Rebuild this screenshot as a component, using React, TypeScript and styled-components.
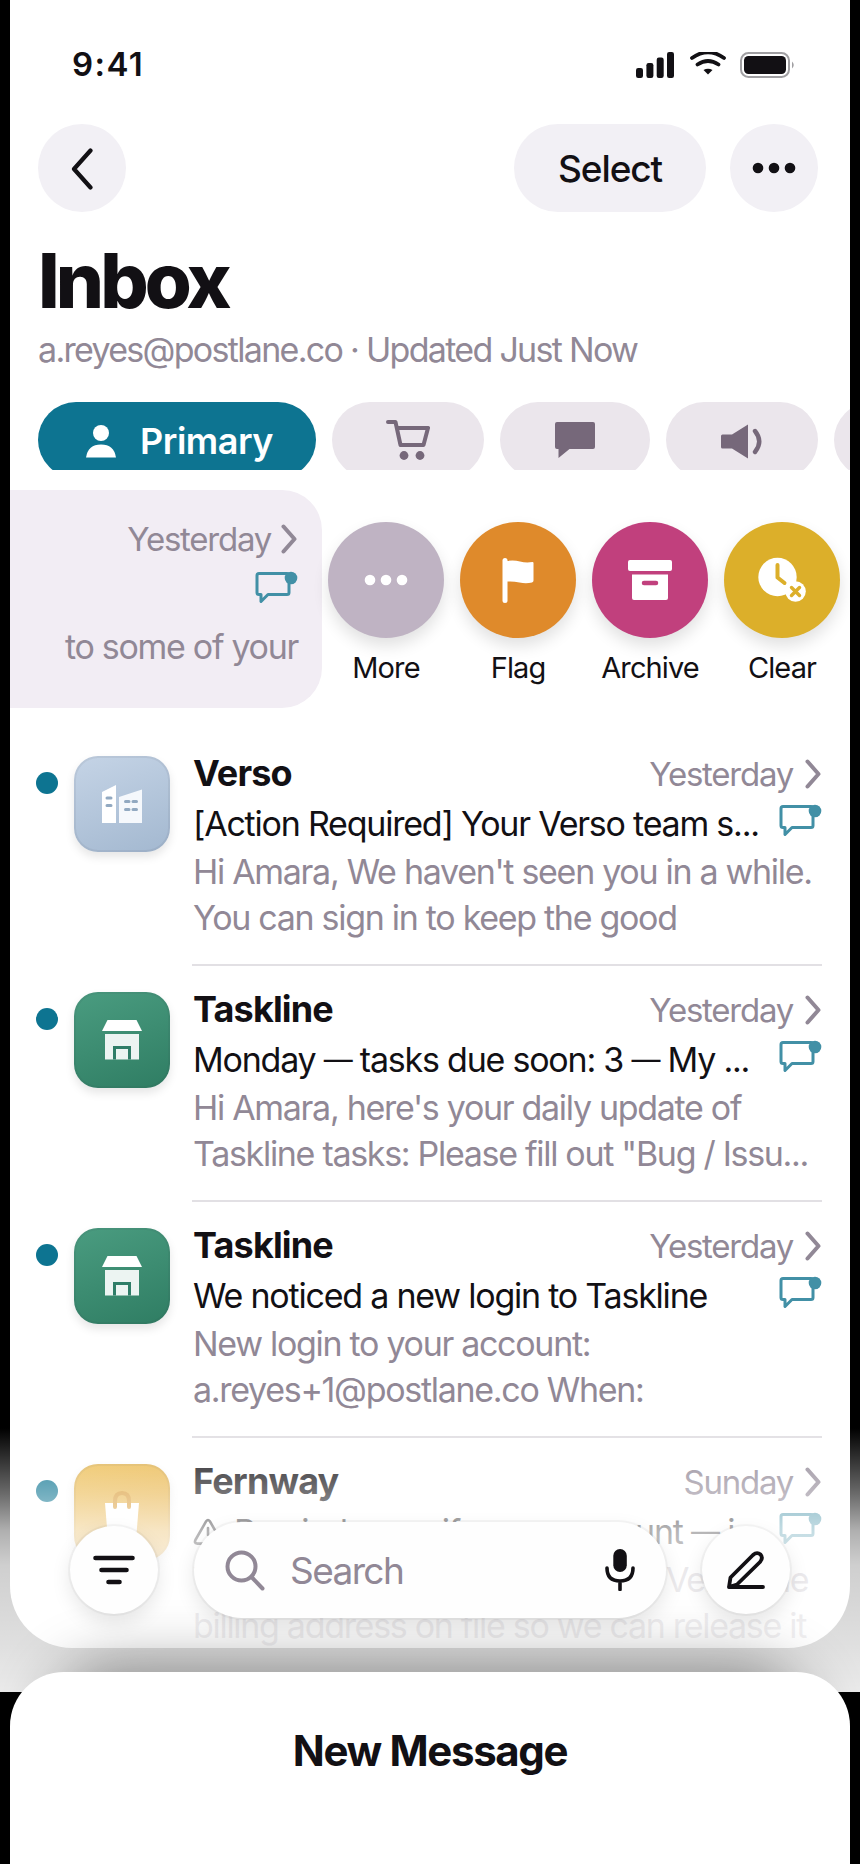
import React from 'react';
import styled, { createGlobalStyle } from 'styled-components';

const INK = '#121014';
const MUTED = '#918896';
const TEAL = '#0d7491';

const GlobalStyle = createGlobalStyle`
  * { box-sizing: border-box; }
  body {
    margin: 0;
    background: #000;
    font-family: Inter, "Liberation Sans", sans-serif;
    color: ${INK};
  }
`;

const Stage = styled.main`
  position: relative;
  width: 860px;
  height: 1864px;
  overflow: hidden;
  background: #000;
`;

const Screen = styled.section`
  width: 840px;
  height: 1648px;
  margin: 0 10px;
  background: #fff;
  border-radius: 0 0 62px 62px;
  overflow: hidden;
`;

const StatusBar = styled.div`
  display: flex;
  justify-content: space-between;
  height: 124px;
  padding: 44px 55px 0 62px;
`;

const Time = styled.span`
  font-size: 33px;
  line-height: 40px;
  font-weight: 600;
  letter-spacing: 1.4px;
`;

const StatusIcons = styled.div`
  display: flex;
  padding-top: 8px;
`;

const NavBar = styled.nav`
  display: flex;
  gap: 24px;
  height: 88px;
  padding: 0 32px 0 28px;
`;

const NavButton = styled.button<{ $width?: number }>`
  display: flex;
  align-items: center;
  justify-content: center;
  width: ${(p) => p.$width ?? 88}px;
  height: 88px;
  padding: 0;
  border: 0;
  border-radius: 44px;
  background: #f2f0f5;
  color: ${INK};
  font: 500 37px/44px Inter, sans-serif;
  letter-spacing: -1.1px;
`;

const SelectLabel = styled.span`
  padding-top: 1px;
`;

const Spacer = styled.div`
  flex: 1;
`;

const Heading = styled.header`
  height: 190px;
  padding: 20px 28px 0;
`;

const Title = styled.h1`
  margin: 0;
  font-size: 76px;
  line-height: 96px;
  font-weight: 800;
  letter-spacing: -3.9px;
`;

const Subtitle = styled.p`
  margin: 0;
  font-size: 34px;
  line-height: 44px;
  letter-spacing: -1.7px;
  color: ${MUTED};
`;

const Chips = styled.div`
  display: flex;
  gap: 16px;
  height: 68px;
  padding-left: 28px;
  overflow: hidden;
`;

const Chip = styled.div<{ $width: number; $active?: boolean }>`
  display: flex;
  flex: none;
  align-items: center;
  justify-content: center;
  gap: 23px;
  width: ${(p) => p.$width}px;
  height: 76px;
  padding: ${(p) => (p.$active ? '2px 0 0 4px' : '0')};
  border-radius: 38px;
  background: ${(p) => (p.$active ? TEAL : '#ebe6ec')};
  color: ${(p) => (p.$active ? '#fff' : '#76687a')};
  font-size: 36px;
  font-weight: 600;
  letter-spacing: -0.5px;
`;

const SwipeRow = styled.div`
  display: flex;
  height: 218px;
  margin-top: 20px;
`;

const SwipedMail = styled.div`
  display: flex;
  flex-direction: column;
  align-items: flex-end;
  width: 312px;
  padding: 26px 24px 0 0;
  border-radius: 0 40px 40px 0;
  background: #f2edf4;
`;

const SwipeActions = styled.div`
  display: flex;
  gap: 16px;
  padding: 32px 0 0 6px;
`;

const Action = styled.div`
  display: flex;
  flex-direction: column;
  align-items: center;
  width: 116px;
  font-size: 29px;
  line-height: 36px;
  letter-spacing: -0.9px;
  white-space: nowrap;
`;

const ActionDisc = styled.div<{ $color: string }>`
  display: flex;
  align-items: center;
  justify-content: center;
  width: 116px;
  height: 116px;
  margin-bottom: 12px;
  border-radius: 50%;
  background: ${(p) => p.$color};
  color: #fff;
  box-shadow: 0 8px 16px rgba(0, 0, 0, 0.12);
`;

const MailList = styled.div`
  padding-top: 34px;
`;

const Mail = styled.article`
  display: flex;
  height: 236px;
  padding: 14px 28px 0 26px;
`;

const Unread = styled.span`
  width: 22px;
  height: 22px;
  margin: 16px 16px 0 0;
  border-radius: 50%;
  background: ${TEAL};
`;

const Avatar = styled.div<{ $bg: string }>`
  display: flex;
  align-items: center;
  justify-content: center;
  width: 96px;
  height: 96px;
  margin-right: 22px;
  border-radius: 24px;
  background: ${(p) => p.$bg};
  box-shadow: 0 5px 10px rgba(0, 0, 0, 0.1), inset 0 0 0 2px rgba(60, 60, 70, 0.07);
`;

const MailBody = styled.div<{ $divided?: boolean }>`
  flex: 1;
  min-width: 0;
  height: 210px;
  padding-left: 1px;
  border-bottom: 2px solid ${(p) => (p.$divided ? '#e2e0e4' : 'transparent')};
`;

const Line = styled.div<{ $height: number }>`
  display: flex;
  align-items: center;
  justify-content: space-between;
  height: ${(p) => p.$height}px;
`;

const Sender = styled.h2`
  margin: 0;
  font-size: 36px;
  line-height: 34px;
  font-weight: 700;
  letter-spacing: -0.85px;
`;

const When = styled.span<{ $gap?: number }>`
  display: flex;
  align-items: center;
  gap: ${(p) => p.$gap ?? 12}px;
  font-size: 33px;
  line-height: 44px;
  letter-spacing: -1.25px;
  color: ${MUTED};
  padding-top: 1px;
`;

const Subject = styled.div`
  display: flex;
  align-items: center;
  gap: 11px;
  padding-top: 8px;
  font-size: 34px;
  line-height: 44px;
  letter-spacing: -1.22px;
  white-space: nowrap;
`;

const Dash = styled.span`
  font-size: 29px;
  vertical-align: 2px;
  line-height: 1;
`;

const Preview = styled.p`
  margin: 0;
  font-size: 34px;
  line-height: 46px;
  letter-spacing: -1.3px;
  color: ${MUTED};
  white-space: pre;
`;

const BottomFade = styled.div`
  position: absolute;
  inset: 1428px 0 172px;
  background: linear-gradient(
    rgba(255, 255, 255, 0) 0%,
    rgba(255, 255, 255, 0.25) 15%,
    rgba(255, 255, 255, 0.42) 25%,
    rgba(255, 255, 255, 0.69) 39%,
    rgba(255, 255, 255, 0.81) 52%,
    rgba(255, 255, 255, 0.88) 83%,
    rgba(255, 255, 255, 0.92) 100%
  );
`;

const Sheet = styled.section`
  position: absolute;
  inset: 1672px 10px 0;
  padding-top: 52px;
  border-radius: 54px 54px 0 0;
  background: #fff;
  text-align: center;
  font-size: 42px;
  line-height: 54px;
  font-weight: 700;
  letter-spacing: -1.35px;
`;

const SheetShadow = styled.div`
  position: absolute;
  inset: 1428px 0 172px;
  overflow: hidden;
  &::after {
    content: '';
    position: absolute;
    inset: 244px 60px -200px;
    border-radius: 54px;
    box-shadow: 0 0 60px 6px rgba(0, 0, 0, 0.42);
  }
`;

const Toolbar = styled.div`
  position: absolute;
  inset: 1522px 70px auto;
  display: flex;
  align-items: center;
  height: 96px;
`;

const RoundButton = styled.button`
  display: flex;
  align-items: center;
  justify-content: center;
  width: 88px;
  height: 88px;
  padding: 0;
  border: 0;
  border-radius: 50%;
  background: #fefefe;
  box-shadow: 0 0 0 2px rgba(0, 0, 0, 0.035), 0 8px 20px rgba(0, 0, 0, 0.1);
`;

const SearchField = styled.div`
  display: flex;
  align-items: center;
  width: 472px;
  height: 96px;
  margin: 0 36px;
  padding: 0 31px;
  border-radius: 48px;
  background: #fefefe;
  box-shadow: 0 0 0 2px rgba(0, 0, 0, 0.035), 0 8px 20px rgba(0, 0, 0, 0.1);
  color: ${MUTED};
  font-size: 37px;
  letter-spacing: -1.6px;
`;

const SearchText = styled.span`
  flex: 1;
  padding-left: 25px;
`;

const Chevron = () => (
  <svg width="17" height="30" viewBox="0 0 17 30" fill="none" stroke="currentColor" strokeWidth="4" strokeLinecap="round" strokeLinejoin="round">
    <path d="M2.500 2.500 13.500 15 2.500 27.500" />
  </svg>
);

const ThreadSvg = styled.svg`
  flex: none;
`;

const ThreadIcon = () => (
  <ThreadSvg width="44" height="34" viewBox="0 0 44 34">
    <path d="M5 3.500h28q2 0 2 2v17q0 2-2 2H14L7 31.500V24.500H5q-2 0-2-2v-17q0-2 2-2Z" fill="none" stroke="#4290a6" strokeWidth="3" strokeLinejoin="round" />
    <circle cx="37" cy="8" r="6.300" fill="#4290a6" />
  </ThreadSvg>
);

const Dots = () => (
  <svg width="44" height="12" viewBox="0 0 44 12" fill="currentColor">
    <circle cx="6" cy="6" r="5.300" />
    <circle cx="22" cy="6" r="5.300" />
    <circle cx="38" cy="6" r="5.300" />
  </svg>
);

const Buildings = () => (
  <svg width="42" height="40" viewBox="0 0 42 40">
    <path d="M1 8 15 1v38H1Z" fill="#fff" />
    <path d="M18 13 41 5.500V39H18Z" fill="#f5f8fc" />
    <g stroke="#92a9c1" strokeWidth="3" strokeLinecap="round">
      <path d="M6 14h4M6 21.500h4M24.500 17.500h3.500M32 17.500h3.500M24.500 25.500h3.500M32 25.500h3.500" />
    </g>
  </svg>
);

const Store = () => (
  <svg width="42" height="40" viewBox="0 0 42 40">
    <path d="M6.500 0h29L41 11H1Z" fill="#fff" />
    <path d="M4 14h34v25.500H4Z" fill="#ecf4f2" />
    <path d="M12 26h18v13.500h-3V29H15v10.500h-3Z" fill="#2f7d68" />
  </svg>
);

const Bag = () => (
  <svg width="42" height="44" viewBox="0 0 42 44">
    <path d="M4 13h34l-2.500 31h-29Z" fill="#fff" />
    <path d="M14 17v-6q0-8 7-8t7 8v6" fill="none" stroke="#d8982f" strokeWidth="4" strokeLinecap="round" />
  </svg>
);

const Warning = () => (
  <svg width="30" height="28" viewBox="0 0 30 28" fill="none" stroke="currentColor" strokeWidth="2.600" strokeLinecap="round" strokeLinejoin="round">
    <path d="M13.200 3.200 2.400 22q-1.400 3 1.600 3.600h22q3-.6 1.600-3.600L16.800 3.200q-1.800-2.400-3.600 0ZM15 10v7M15 21v.4" />
  </svg>
);

const BLUE_BG = 'linear-gradient(160deg, #c5d4e6, #a3b8d0)';
const GREEN_BG = 'linear-gradient(160deg, #4a9c80, #2f7d63)';
const GOLD_BG = 'linear-gradient(160deg, #edbf55, #e3a83c)';

type MailData = {
  sender: string;
  when: string;
  subject: string;
  preview: string;
  bg: string;
  icon: React.ReactNode;
  warn?: boolean;
};

const mails: MailData[] = [
  { sender: 'Verso', when: 'Yesterday', subject: '[Action Required] Your Verso team s...', preview: "Hi Amara, We haven't seen you in a while.\nYou can sign in to keep the good", bg: BLUE_BG, icon: <Buildings /> },
  { sender: 'Taskline', when: 'Yesterday', subject: 'Monday — tasks due soon: 3 — My ...', preview: 'Hi Amara, here\'s your daily update of\nTaskline tasks: Please fill out "Bug / Issu...', bg: GREEN_BG, icon: <Store /> },
  { sender: 'Taskline', when: 'Yesterday', subject: 'We noticed a new login to Taskline', preview: 'New login to your account:\na.reyes+1@postlane.co When:', bg: GREEN_BG, icon: <Store /> },
  { sender: 'Fernway', when: 'Sunday', subject: 'Reminder: verify your account — i...', preview: 'Your deposit is on hold for now. Verify the\nbilling address on file so we can release it', bg: GOLD_BG, icon: <Bag />, warn: true },
];

const SubjectText = ({ text }: { text: string }) => (
  <span>
    {text.split('—').map((part, i) => (
      <React.Fragment key={i}>
        {i > 0 && <Dash>—</Dash>}
        {part}
      </React.Fragment>
    ))}
  </span>
);

export default function App() {
  return (
    <Stage>
      <GlobalStyle />
      <Screen>
        <StatusBar>
          <Time>9:41</Time>
          <StatusIcons>
            <svg width="160" height="27" viewBox="0 0 160 27" fill={INK}>
              <rect x="1" y="16" width="7" height="10" rx="2.200" />
              <rect x="11.400" y="11" width="7" height="15" rx="2.200" />
              <rect x="21.700" y="5.500" width="7" height="20.500" rx="2.200" />
              <rect x="32" y="0" width="7" height="26" rx="2.200" />
              <g fill="none" stroke={INK} strokeWidth="3.800" strokeLinecap="round">
                <path d="M57 6q16-11.500 32 0M62.500 12.500q10.500-7 21 0" />
              </g>
              <path d="M68.500 18q4.500-2.600 9 0L73 22.500Z" />
              <rect x="106" y="1" width="48" height="24" rx="7.500" fill="none" stroke="#a09fa2" strokeWidth="2" />
              <rect x="109" y="4" width="42" height="18" rx="4.500" />
              <path d="M157 9.500q3.500 3.500 0 7Z" fill="#a09fa2" />
            </svg>
          </StatusIcons>
        </StatusBar>

        <NavBar>
          <NavButton aria-label="Back">
            <svg width="24" height="44" viewBox="0 0 24 44" fill="none" stroke={INK} strokeWidth="4.200" strokeLinecap="round" strokeLinejoin="round">
              <path d="M20.500 4.500 4 23l16.500 18.500" />
            </svg>
          </NavButton>
          <Spacer />
          <NavButton $width={192}><SelectLabel>Select</SelectLabel></NavButton>
          <NavButton aria-label="More"><Dots /></NavButton>
        </NavBar>

        <Heading>
          <Title>Inbox</Title>
          <Subtitle>a.reyes@postlane.co · Updated Just Now</Subtitle>
        </Heading>

        <Chips>
          <Chip $width={278} $active>
            <svg width="32" height="34" viewBox="0 0 32 34" fill="currentColor">
              <circle cx="16" cy="9" r="8" />
              <path d="M1 33.500Q3 20.500 16 20.500T31 33.500Z" />
            </svg>
            Primary
          </Chip>
          <Chip $width={152}>
            <svg width="44" height="42" viewBox="0 0 44 42" fill="none" stroke="currentColor" strokeWidth="4" strokeLinecap="round" strokeLinejoin="round">
              <path d="M2 3h7.500L14.500 26h23L42 9H11" />
              <g fill="currentColor" stroke="none"><circle cx="18" cy="36.500" r="4.400" /><circle cx="34" cy="36.500" r="4.400" /></g>
            </svg>
          </Chip>
          <Chip $width={150}>
            <svg width="40" height="38" viewBox="0 0 40 38" fill="currentColor">
              <path d="M2 1h36q2 0 2 2v23q0 2-2 2H14.500L3.500 37V28H2q-2 0-2-2V3q0-2 2-2Z" />
            </svg>
          </Chip>
          <Chip $width={152}>
            <svg width="42" height="40" viewBox="0 -3.500 42 40" fill="currentColor">
              <path d="M1.500 11H11L27 1v34L11 25H1.500Q0 25 0 23.500v-11Q0 11 1.500 11Z" />
              <path d="M34 7.500q8.500 10.500 0 21" fill="none" stroke="currentColor" strokeWidth="4.400" strokeLinecap="round" />
            </svg>
          </Chip>
          <Chip $width={152} />
        </Chips>

        <SwipeRow>
          <SwipedMail>
            <When $gap={10}>Yesterday <Chevron /></When>
            <Line $height={52}><ThreadIcon /></Line>
            <Line $height={67}><Preview>to some of your</Preview></Line>
          </SwipedMail>
          <SwipeActions>
            <Action><ActionDisc $color="#bfb3c3"><Dots /></ActionDisc>More</Action>
            <Action>
              <ActionDisc $color="#df8a2b">
                <svg width="34" height="46" viewBox="0 0 34 46" fill="#fff">
                  <rect x="1.500" y="1" width="5" height="45" rx="2.500" />
                  <path d="M6 4q7-1 13 .5t12.500.5q1 0 1 1v17.500q0 1.500-1.500 2-6 1.500-12.500 0T6 24.500Z" />
                </svg>
              </ActionDisc>
              Flag
            </Action>
            <Action>
              <ActionDisc $color="#c1407d">
                <svg width="44" height="40" viewBox="0 0 44 40" fill="#fff">
                  <rect width="44" height="11" rx="2" />
                  <path d="M4 14.500h36V38q0 2-2 2H6q-2 0-2-2Z" />
                  <path d="M16 23h12" stroke="#c1407d" strokeWidth="4.500" strokeLinecap="round" />
                </svg>
              </ActionDisc>
              Archive
            </Action>
            <Action>
              <ActionDisc $color="#dcaf2a">
                <svg width="48" height="46" viewBox="0 0 48 46">
                  <circle cx="19.500" cy="20" r="19.200" fill="#fff" />
                  <path d="M19.500 8v12.500l7 5.500" fill="none" stroke="#dcaf2a" strokeWidth="4" strokeLinecap="round" strokeLinejoin="round" />
                  <circle cx="37.500" cy="34.500" r="10.300" fill="#fff" />
                  <path d="m33.500 30.500 8 8m0-8-8 8" stroke="#dcaf2a" strokeWidth="3.400" strokeLinecap="round" />
                </svg>
              </ActionDisc>
              Clear
            </Action>
          </SwipeActions>
        </SwipeRow>

        <MailList>
          {mails.map((m, i) => (
            <Mail key={i}>
              <Unread />
              <Avatar $bg={m.bg}>{m.icon}</Avatar>
              <MailBody $divided={i < 3}>
                <Line $height={34}><Sender>{m.sender}</Sender><When>{m.when} <Chevron /></When></Line>
                <Line $height={59}><Subject>{m.warn && <Warning />}<SubjectText text={m.subject} /></Subject><ThreadIcon /></Line>
                <Preview>{m.preview}</Preview>
              </MailBody>
            </Mail>
          ))}
        </MailList>
      </Screen>

      <BottomFade />
      <SheetShadow />

      <Toolbar>
        <RoundButton aria-label="Filter">
          <svg width="44" height="32" viewBox="0 0 44 32" stroke={INK} strokeWidth="4.600" strokeLinecap="round">
            <path d="M3.500 4h37M9.500 16h25M16.500 28h11" />
          </svg>
        </RoundButton>
        <SearchField>
          <svg width="40" height="42" viewBox="0 0 40 42" fill="none" stroke="currentColor" strokeWidth="4" strokeLinecap="round">
            <circle cx="16.500" cy="17.500" r="14" />
            <path d="m27 28.500 10.500 11" />
          </svg>
          <SearchText>Search</SearchText>
          <svg width="30" height="42" viewBox="0 0 30 42" fill="none" stroke={INK} strokeWidth="3.600" strokeLinecap="round">
            <rect x="8.300" y="0" width="13.500" height="23" rx="6.700" fill={INK} stroke="none" />
            <path d="M2 19q0 13 13 13t13-13M15 32v8.500" />
          </svg>
        </SearchField>
        <RoundButton aria-label="Compose">
          <svg width="40" height="40" viewBox="0 0 40 40" fill="none" stroke={INK} strokeWidth="3.800" strokeLinecap="round" strokeLinejoin="round">
            <path d="M3 37h34M3 37l1.500-9.500L27 5q4-3.500 7.500-.5 3 3.500-.5 7.500L11 34.500 3 37" />
          </svg>
        </RoundButton>
      </Toolbar>

      <Sheet>New Message</Sheet>
    </Stage>
  );
}
